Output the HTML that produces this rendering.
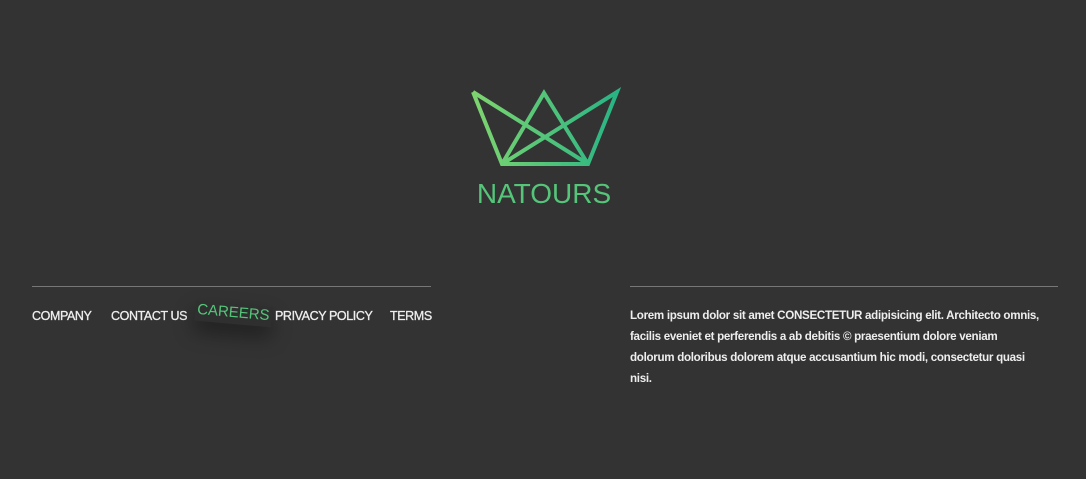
<!DOCTYPE html>
<html><head><style>
body{margin:0;width:1086px;height:479px;background:#333;font-family:"Liberation Sans",sans-serif;position:relative;overflow:hidden}
.l{position:absolute;top:286px;height:1px;background:#777}
.nav{position:absolute;top:309px;font-size:12.5px;color:#eee;letter-spacing:-0.4px;-webkit-text-stroke:0.3px #eee}
.car{position:absolute;left:195px;top:304px;font-size:15px;color:#55c57a;transform:rotate(5deg);background:#2f2f2f;padding:0 2px 3px;box-shadow:0 10px 20px rgba(0,0,0,.4);letter-spacing:0}
p{position:absolute;left:630px;top:305px;width:440px;margin:0;font-size:11.6px;font-weight:bold;line-height:21px;color:#eee;letter-spacing:-0.3px;white-space:nowrap}
</style></head><body>
<svg width="1086" height="230" style="position:absolute;left:0;top:0">
<defs><linearGradient id="g" x1="0" x2="1"><stop offset="0" stop-color="#7ed56f"/><stop offset="1" stop-color="#28b485"/></linearGradient></defs>
<g fill="none" stroke="url(#g)" stroke-width="4" stroke-linejoin="miter">
<path d="M473 92 L502 164 L588 164 L617 92 L502 164 M473 92 L588 164 M502 164 L544 93 L588 164"/>
</g>
<text x="544" y="203" text-anchor="middle" font-size="28" fill="#55c57a" font-family="Liberation Sans">NATOURS</text>
</svg>
<div class="l" style="left:32px;width:399px"></div>
<div class="l" style="left:630px;width:428px"></div>
<span class="nav" style="left:32px">COMPANY</span>
<span class="nav" style="left:111px">CONTACT US</span>
<span class="car">CAREERS</span>
<span class="nav" style="left:275px">PRIVACY POLICY</span>
<span class="nav" style="left:390px">TERMS</span>
<p>Lorem ipsum dolor sit amet CONSECTETUR adipisicing elit. Architecto omnis,<br>facilis eveniet et perferendis a ab debitis © praesentium dolore veniam<br>dolorum doloribus dolorem atque accusantium hic modi, consectetur quasi<br>nisi.</p>
</body></html>
